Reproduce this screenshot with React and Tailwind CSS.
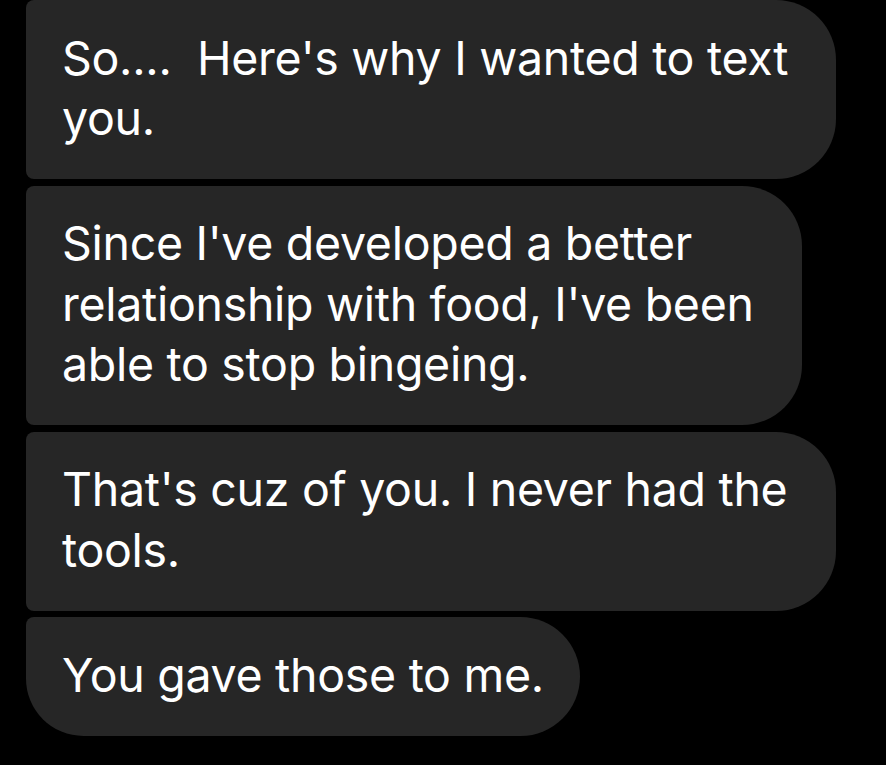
import React from "react";

const messages = [
  {
    lines: ["So....  Here's why I wanted to text", "you."],
    width: "w-[810px]",
    corners: "rounded-tl-[8px] rounded-bl-[8px]",
  },
  {
    lines: ["Since I've developed a better", "relationship with food, I've been", "able to stop bingeing."],
    width: "w-[776px]",
    corners: "rounded-tl-[8px] rounded-bl-[8px]",
  },
  {
    lines: ["That's cuz of you. I never had the", "tools."],
    width: "w-[810px]",
    corners: "rounded-tl-[8px] rounded-bl-[8px]",
  },
  {
    lines: ["You gave those to me."],
    width: "w-[554px]",
    corners: "rounded-tl-[8px] rounded-bl-[58px]",
  },
];

export default function App() {
  return (
    <div
      className="min-h-[765px] w-[886px] bg-black pl-[26px] flex flex-col gap-[6.5px] overflow-hidden"
      style={{ fontFamily: "Inter, 'Liberation Sans', sans-serif" }}
    >
      {messages.map((m, i) => (
        <div
          key={i}
          className={`${m.width} ${m.corners} rounded-r-[60px] bg-[#262626] pl-[36px] pr-[30px] pt-[27.5px] pb-[30.5px] text-white text-[46.5px] leading-[60.5px] tracking-[-0.3px] whitespace-pre`}
        >
          {m.lines.map((l, j) => (
            <div key={j}>{l}</div>
          ))}
        </div>
      ))}
    </div>
  );
}
